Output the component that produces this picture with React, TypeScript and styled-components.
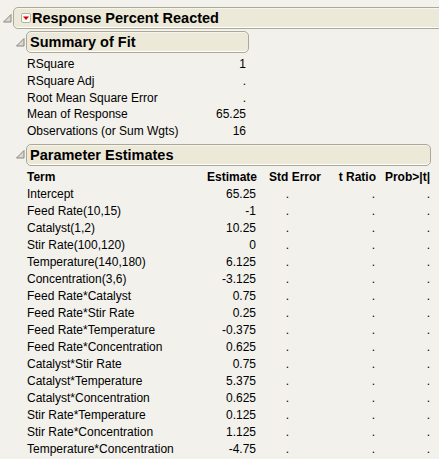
import React from 'react';
import styled, { createGlobalStyle } from 'styled-components';

const Global = createGlobalStyle`
  html, body { margin: 0; padding: 0; background: #f2f1ec; }
  body {
    font-family: "Liberation Sans", Arial, sans-serif;
    color: #000;
    overflow: hidden;
  }
`;

const Page = styled.div`
  width: 439px;
  height: 459px;
  overflow: hidden;
  box-sizing: border-box;
  padding: 7px 0 0 3px;
  background: #f2f1ec;
`;

const Node = styled.div<{ $mt?: number }>`
  display: flex;
  flex-direction: column;
  margin-top: ${(p) => p.$mt ?? 0}px;
`;

const NodeHead = styled.div`
  display: flex;
  align-items: center;
`;

const TwistySvg = styled.svg`
  width: 10px;
  height: 10px;
  flex: none;
  margin-top: 1px;
`;

const HeadBox = styled.div<{ $w: number; $pl: number }>`
  width: ${(p) => p.$w}px;
  height: 22px;
  flex: none;
  box-sizing: border-box;
  border: 1px solid #aca899;
  border-radius: 5px;
  background: #ece9d8;
  box-shadow: inset 0 1px 0 #f6f4ec, inset 0 -1px 0 #ffffff;
  display: flex;
  align-items: center;
  gap: 1px;
  padding-left: ${(p) => p.$pl}px;
  font-weight: bold;
  font-size: 14.5px;
  white-space: nowrap;
`;

const Children = styled.div`
  display: flex;
  flex-direction: column;
  padding-left: 13px;
  margin-top: 2px;
`;

const Body = styled.div<{ $pt: number; $pb: number }>`
  padding: ${(p) => p.$pt}px 0 ${(p) => p.$pb}px 11px;
`;

const SummaryGrid = styled.div`
  width: 219px;
  display: grid;
  grid-template-columns: 1fr auto;
  font-size: 12px;
  grid-auto-rows: 16.75px;
  line-height: 16.75px;
`;

const Label = styled.div`
  white-space: nowrap;
`;

const Value = styled.div`
  text-align: right;
  white-space: nowrap;
`;

const Table = styled.div`
  display: grid;
  grid-template-columns: 180px 50px 64px 55px 54px;
  grid-auto-rows: 17px;
  line-height: 17px;
  font-size: 12px;
`;

const HCell = styled.div<{ $right?: boolean }>`
  font-weight: bold;
  white-space: nowrap;
  text-align: ${(p) => (p.$right ? 'right' : 'left')};
`;

const Cell = styled.div<{ $right?: boolean; $pr?: number }>`
  white-space: nowrap;
  text-align: ${(p) => (p.$right ? 'right' : 'left')};
  padding-right: ${(p) => p.$pr ?? 0}px;
`;

const MenuSvg = styled.svg`
  width: 10px;
  height: 10px;
  flex: none;
  margin-top: -1px;
`;

const Twisty = () => (
  <TwistySvg viewBox="0 0 10 10">
    <polygon points="8,0.5 8,8 0.5,8" fill="#d9d7cf" stroke="#8a8880" strokeWidth="1" strokeLinejoin="round" />
  </TwistySvg>
);

const RedMenu = () => (
  <MenuSvg viewBox="0 0 10 10">
    <rect x="0.5" y="0.5" width="9" height="9" rx="1.5" fill="#fbfaf6" stroke="#b4b1a6" />
    <polygon points="2,3.5 8,3.5 5,7" fill="#d40000" />
  </MenuSvg>
);

const summary: [string, string][] = [
  ['RSquare', '1'],
  ['RSquare Adj', '.'],
  ['Root Mean Square Error', '.'],
  ['Mean of Response', '65.25'],
  ['Observations (or Sum Wgts)', '16'],
];

const params: [string, string][] = [
  ['Intercept', '65.25'],
  ['Feed Rate(10,15)', '-1'],
  ['Catalyst(1,2)', '10.25'],
  ['Stir Rate(100,120)', '0'],
  ['Temperature(140,180)', '6.125'],
  ['Concentration(3,6)', '-3.125'],
  ['Feed Rate*Catalyst', '0.75'],
  ['Feed Rate*Stir Rate', '0.25'],
  ['Feed Rate*Temperature', '-0.375'],
  ['Feed Rate*Concentration', '0.625'],
  ['Catalyst*Stir Rate', '0.75'],
  ['Catalyst*Temperature', '5.375'],
  ['Catalyst*Concentration', '0.625'],
  ['Stir Rate*Temperature', '0.125'],
  ['Stir Rate*Concentration', '1.125'],
  ['Temperature*Concentration', '-4.75'],
];

export default function App() {
  return (
    <>
      <Global />
      <Page>
        <Node>
          <NodeHead>
            <Twisty />
            <HeadBox $w={440} $pl={7}>
              <RedMenu />
              <span>Response Percent Reacted</span>
            </HeadBox>
          </NodeHead>
          <Children>
            <Node>
              <NodeHead>
                <Twisty />
                <HeadBox $w={223} $pl={3}>Summary of Fit</HeadBox>
              </NodeHead>
              <Body $pt={3} $pb={4}>
                <SummaryGrid>
                  {summary.map(([l, v]) => (
                    <React.Fragment key={l}>
                      <Label>{l}</Label>
                      <Value>{v}</Value>
                    </React.Fragment>
                  ))}
                </SummaryGrid>
              </Body>
            </Node>
            <Node>
              <NodeHead>
                <Twisty />
                <HeadBox $w={405} $pl={3}>Parameter Estimates</HeadBox>
              </NodeHead>
              <Body $pt={3} $pb={0}>
                <Table>
                  <HCell>Term</HCell>
                  <HCell $right>Estimate</HCell>
                  <HCell $right>Std Error</HCell>
                  <HCell $right>t Ratio</HCell>
                  <HCell $right>Prob&gt;|t|</HCell>
                  {params.map(([t, e]) => (
                    <React.Fragment key={t}>
                      <Cell>{t}</Cell>
                      <Cell $right $pr={1}>{e}</Cell>
                      <Cell $right $pr={32}>.</Cell>
                      <Cell $right $pr={1}>.</Cell>
                      <Cell $right $pr={0}>.</Cell>
                    </React.Fragment>
                  ))}
                </Table>
              </Body>
            </Node>
          </Children>
        </Node>
      </Page>
    </>
  );
}
